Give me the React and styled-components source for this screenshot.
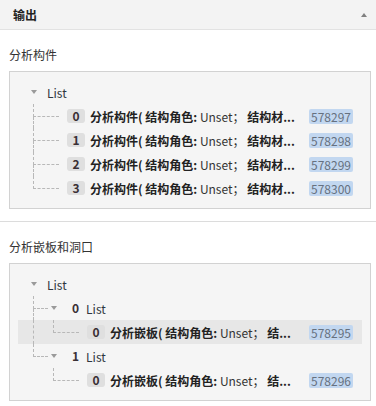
import React from 'react';
import styled, { createGlobalStyle } from 'styled-components';

const GlobalStyle = createGlobalStyle`
    body {
        margin: 0;
        background: #fff;
        font-family: "Noto Sans CJK SC", "Noto Sans", sans-serif;
        font-size: 12px;
        color: #333;
    }
`;

const Header = styled.div`
    height: 29px;
    display: flex;
    align-items: center;
    justify-content: space-between;
    padding: 0 9px 0 13px;
    background: #f3f3f3;
    border-bottom: 1px solid #e2e2e2;
    font-weight: bold;
    color: #222;
`;

const Caret = styled.span`
    display: inline-block;
    width: 0;
    height: 0;
    flex-shrink: 0;
    margin-left: ${p => p.$gap || 0}px;
    border-left: 3px solid transparent;
    border-right: 3px solid transparent;
    ${p => (p.$up ? 'border-bottom: 4px solid #808080;' : 'border-top: 4px solid #9a9a9a;')}
`;

const Section = styled.section`
    padding: 17px 5px 12px 9px;
    border-bottom: ${p => (p.$last ? 'none' : '1px solid #dcdcdc')};
`;

const Title = styled.div`
    line-height: 16px;
    margin-bottom: 8px;
    color: #333;
`;

const TreeBox = styled.div`
    border: 1px solid #d2d2d2;
    background: #f5f5f5;
    padding: 8px;
`;

const Row = styled.div`
    height: 24px;
    display: flex;
    align-items: center;
    padding: 0 9px 0 ${p => (p.$root ? 13 : 15)}px;
    background: ${p => (p.$active ? '#e7e7e7' : 'transparent')};
`;

const Guide = styled.div`
    width: 20px;
    flex-shrink: 0;
    align-self: stretch;
    box-sizing: border-box;
    border-left: ${p => (p.$on ? '1px dashed #b8b8b8' : 'none')};
`;

const Zone = styled.div`
    width: 34px;
    flex-shrink: 0;
    align-self: stretch;
    display: flex;
    align-items: center;
`;

const Connector = styled.div`
    width: ${p => p.$w}px;
    flex-shrink: 0;
    align-self: stretch;
    display: flex;
    flex-direction: column;
`;

const Elbow = styled.div`
    flex: 1;
    box-sizing: border-box;
    border-left: 1px dashed #b8b8b8;
    border-bottom: 1px dashed #b8b8b8;
`;

const Tail = styled.div`
    flex: 1;
    box-sizing: border-box;
    border-left: ${p => (p.$on ? '1px dashed #b8b8b8' : 'none')};
`;

const Key = styled.span`
    flex-shrink: 0;
    height: 14px;
    line-height: 14px;
    border-radius: 3px;
    font-weight: bold;
    color: #3a3035;
    ${p =>
        p.$list
            ? 'padding-left: 5px; margin-right: 7px;'
            : 'min-width: 18px; text-align: center; background: #dfdfdf; margin-right: 5px;'}
`;

const NodeLabel = styled.span`
    margin-left: ${p => (p.$root ? 10 : 0)}px;
    color: #2f3640;
`;

const Label = styled.span`
    flex: 1;
    min-width: 0;
    white-space: nowrap;
    overflow: hidden;
    color: #333;
    margin-right: 12px;

    b {
        color: #222;
    }
`;

const Value = styled.span`
    flex-shrink: 0;
    height: 15px;
    line-height: 15px;
    padding: 0 2px;
    background: #c2d7f0;
    color: #66717f;
    border-radius: 2px;
`;

const leaf = (key, kind, id, tail) => ({ key, kind, id, tail });

const tree1 = {
    label: 'List',
    children: [
        leaf(0, '分析构件', 578297, '结构材...'),
        leaf(1, '分析构件', 578298, '结构材...'),
        leaf(2, '分析构件', 578299, '结构材...'),
        leaf(3, '分析构件', 578300, '结构材...'),
    ],
};

const tree2 = {
    label: 'List',
    children: [
        { key: 0, label: 'List', children: [leaf(0, '分析嵌板', 578295, '结...')] },
        { key: 1, label: 'List', children: [leaf(0, '分析嵌板', 578296, '结...')] },
    ],
};

function flatten(node, depth, guides, isLast, out) {
    out.push({ node, depth, guides, isLast });
    if (node.children) {
        node.children.forEach((c, i) =>
            flatten(
                c,
                depth + 1,
                depth > 0 ? [...guides, !isLast] : guides,
                i === node.children.length - 1,
                out
            )
        );
    }
    return out;
}

function TreeRow({ item, active }) {
    const { node, depth, guides, isLast } = item;
    if (depth === 0) {
        return (
            <Row $root>
                <Caret />
                <NodeLabel $root>{node.label}</NodeLabel>
            </Row>
        );
    }
    const isList = !!node.children;
    return (
        <Row $active={active}>
            {guides.map((on, i) => (
                <Guide key={i} $on={on} />
            ))}
            <Zone>
                <Connector $w={isList ? 15 : 26}>
                    <Elbow />
                    <Tail $on={!isLast} />
                </Connector>
                {isList && <Caret $gap={3} />}
            </Zone>
            <Key $list={isList}>{node.key}</Key>
            {isList ? (
                <NodeLabel>{node.label}</NodeLabel>
            ) : (
                <>
                    <Label>
                        <b>{node.kind}( 结构角色:</b> Unset；&nbsp;<b>{node.tail}</b>
                    </Label>
                    <Value>{node.id}</Value>
                </>
            )}
        </Row>
    );
}

function Tree({ data, activeRow }) {
    const rows = flatten(data, 0, [], true, []);
    return (
        <TreeBox>
            {rows.map((r, i) => (
                <TreeRow key={i} item={r} active={i === activeRow} />
            ))}
        </TreeBox>
    );
}

export default function App() {
    return (
        <>
            <GlobalStyle />
            <Header>
                <span>输出</span>
                <Caret $up />
            </Header>
            <Section>
                <Title>分析构件</Title>
                <Tree data={tree1} />
            </Section>
            <Section $last>
                <Title>分析嵌板和洞口</Title>
                <Tree data={tree2} activeRow={2} />
            </Section>
        </>
    );
}
